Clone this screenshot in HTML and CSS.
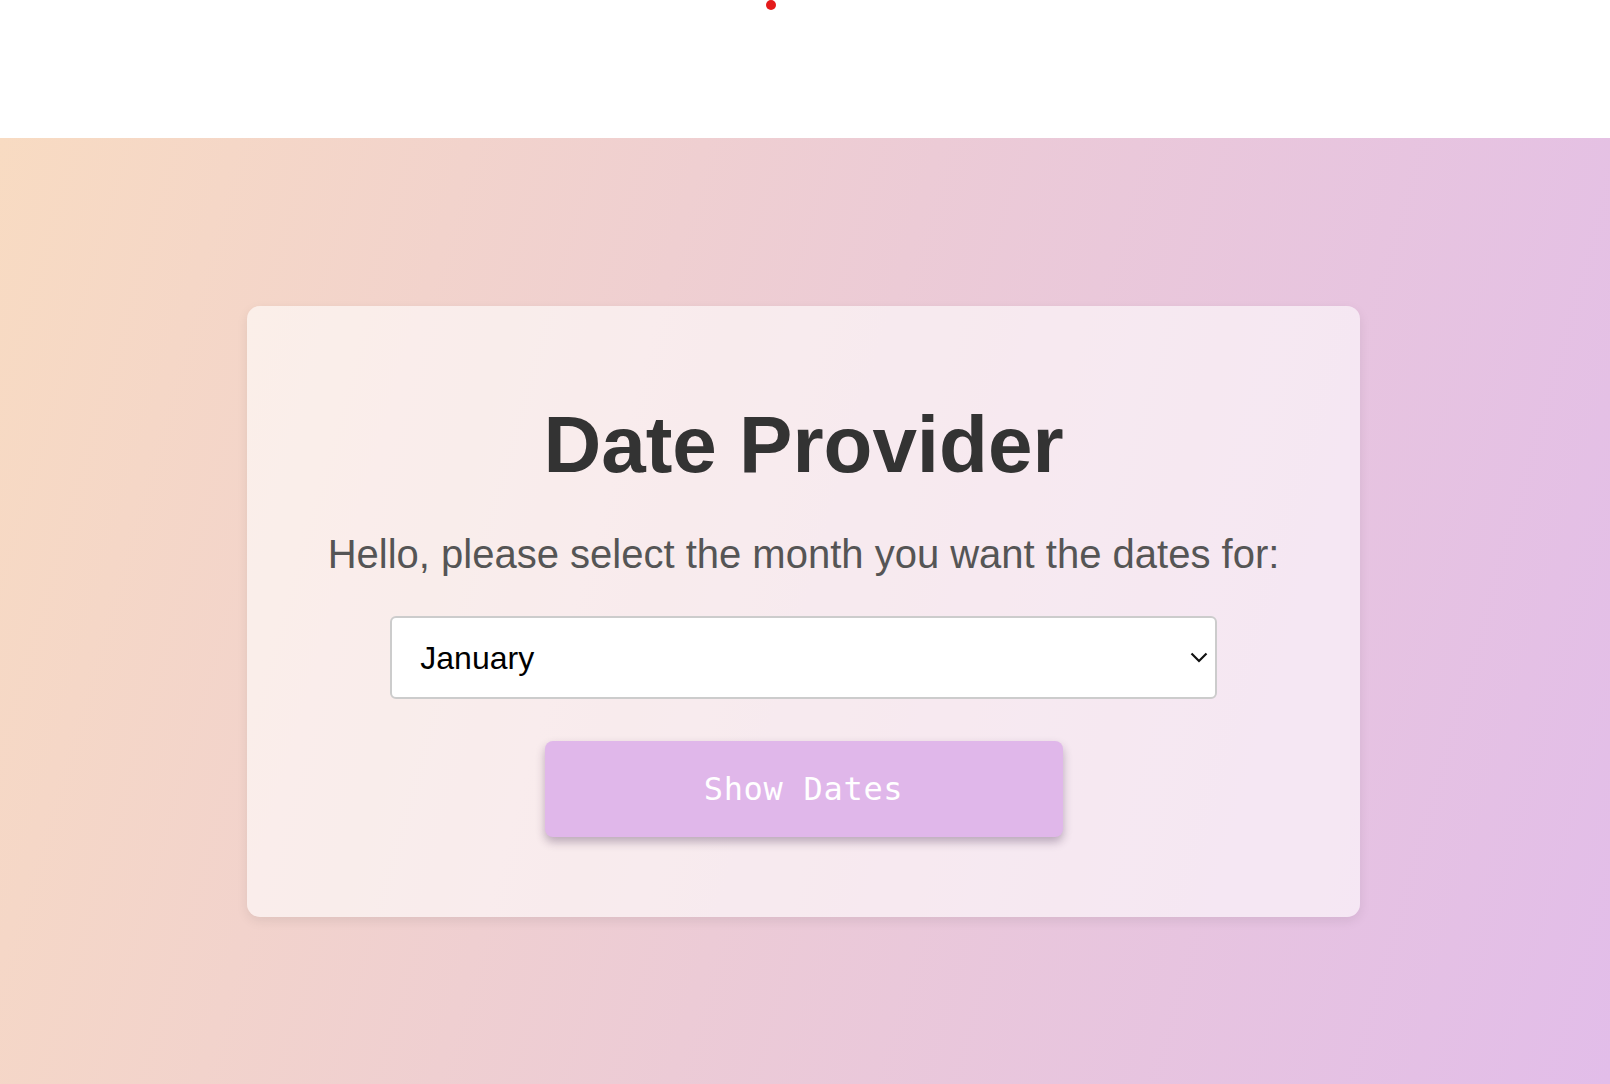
FILE: index.html
```html
<!DOCTYPE html>
<html lang="en">
<head>
<meta charset="utf-8">
<title>Date Provider</title>
<link rel="stylesheet" href="styles.css">
</head>
<body>
<header class="topbar">
  <span class="dot"></span>
</header>
<main class="stage">
  <section class="card">
    <h1 class="title">Date Provider</h1>
    <p class="lead">Hello, please select the month you want the dates for:</p>
    <div class="select-wrap">
      <select class="month">
        <option>January</option>
        <option>February</option>
        <option>March</option>
        <option>April</option>
        <option>May</option>
        <option>June</option>
        <option>July</option>
        <option>August</option>
        <option>September</option>
        <option>October</option>
        <option>November</option>
        <option>December</option>
      </select>
      <svg class="chevron" width="18" height="11" viewBox="0 0 18 11" aria-hidden="true">
        <path d="M1.5 1.5 L9 9 L16.5 1.5" fill="none" stroke="#111" stroke-width="2.2" stroke-linecap="butt" stroke-linejoin="miter"/>
      </svg>
    </div>
    <button class="show" type="button">Show Dates</button>
  </section>
</main>
</body>
</html>
```
FILE: styles.css
```css
* { box-sizing: border-box; }
html, body { margin: 0; padding: 0; }
body {
  font-family: "Liberation Sans", Arial, sans-serif;
  background: #fff;
  min-height: 1084px;
  overflow: hidden;
}
.topbar {
  position: relative;
  height: 138px;
  background: #fff;
}
.dot {
  position: absolute;
  left: 766px;
  top: 0;
  width: 10px;
  height: 10px;
  border-radius: 50%;
  background: #e41b1b;
}
.stage {
  height: 946px;
  background: linear-gradient(106deg, #f8dbc2 0%, #eccbd6 50%, #e2bde9 100%);
  display: flex;
  justify-content: center;
  align-items: flex-start;
  padding-top: 168px;
}
.card {
  width: 1113px;
  margin-right: 3px;
  background: rgba(255, 255, 255, 0.6);
  border-radius: 13px;
  box-shadow: 0 4px 12px rgba(0, 0, 0, 0.08);
  padding: 40px 40px 80px;
  display: flex;
  flex-direction: column;
  align-items: center;
}
.title {
  margin: 53px 0 40px;
  font-size: 80px;
  font-weight: bold;
  color: #333;
  line-height: 92px;
}
.lead {
  margin: 0 0 39px;
  font-size: 40px;
  line-height: 46px;
  color: #555;
}
.select-wrap {
  position: relative;
  width: 80%;
  margin: 0 0 42px;
}
.month {
  display: block;
  width: 100%;
  height: 83px;
  padding: 0 40px 0 28px;
  font-family: "Liberation Sans", Arial, sans-serif;
  font-size: 32px;
  color: #000;
  background: #fff;
  border: 2px solid #ccc;
  border-radius: 6px;
  -webkit-appearance: none;
  appearance: none;
  outline: none;
}
.chevron {
  position: absolute;
  right: 9px;
  top: 36px;
  pointer-events: none;
}
.show {
  width: 518px;
  height: 96px;
  border: none;
  border-radius: 8px;
  background: #e0b7ea;
  color: #fff;
  font-family: "DejaVu Sans Mono", monospace;
  font-size: 32px;
  letter-spacing: 0.7px;
  box-shadow: 0 5px 10px rgba(60, 30, 70, 0.32);
  cursor: pointer;
}
```
